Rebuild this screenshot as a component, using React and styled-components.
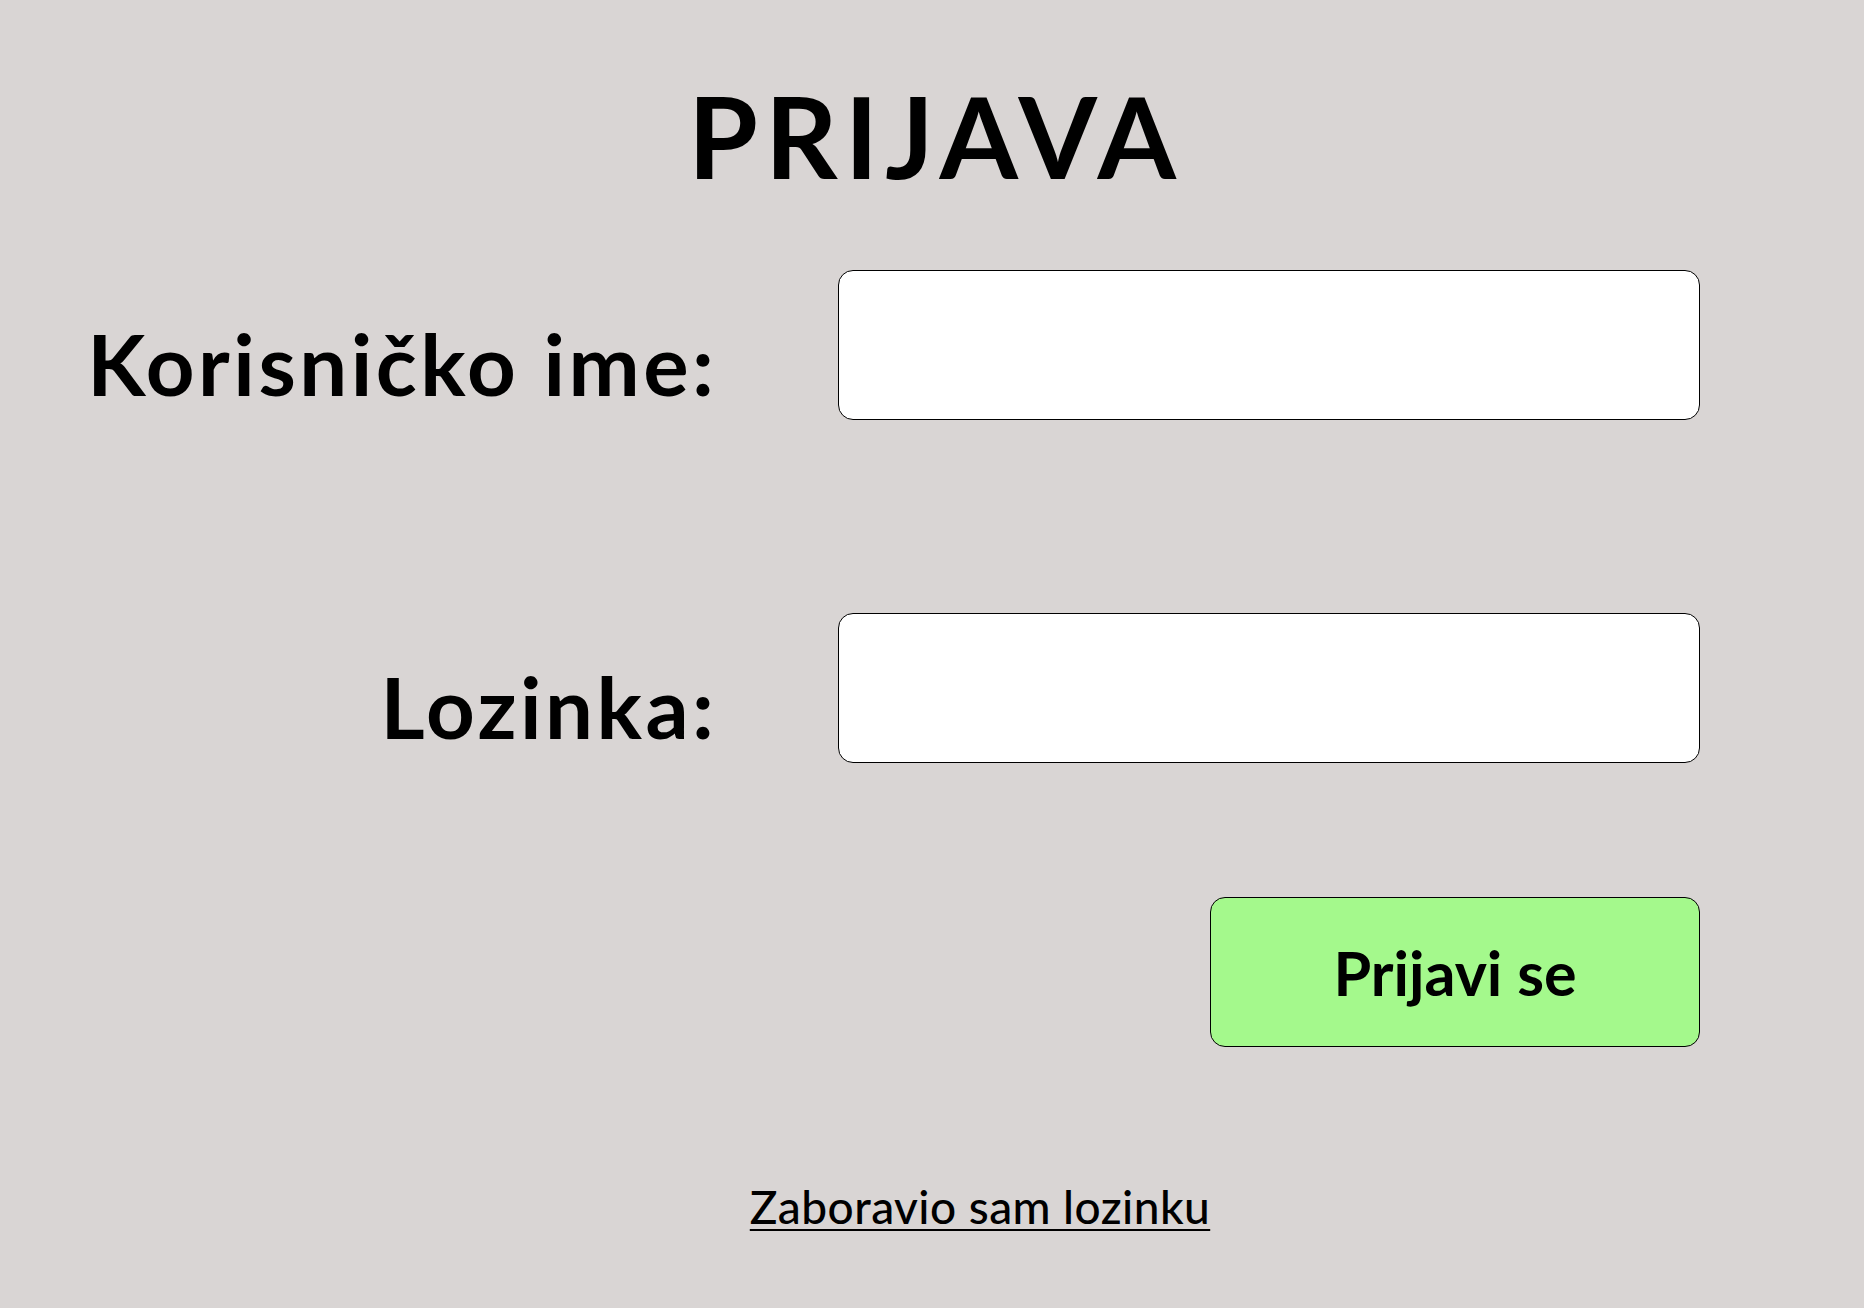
import React from "react";
import styled, { createGlobalStyle } from "styled-components";

const Global = createGlobalStyle`
  html, body { margin: 0; padding: 0; }
  body {
    background: #d9d5d4;
    font-family: "Lato", "Noto Sans", sans-serif;
    color: #000;
  }
`;

const Page = styled.main`
  min-height: 100vh;
  box-sizing: border-box;
  padding-top: 79px;
  display: flex;
  flex-direction: column;
`;

const Title = styled.h1`
  margin: 0;
  font-size: 113px;
  line-height: 1;
  font-weight: 700;
  text-align: center;
  letter-spacing: 7px;
  padding-left: 7px;
`;

const Fields = styled.form`
  margin-top: 78px;
  display: grid;
  grid-template-columns: 714px 862px;
  column-gap: 124px;
  row-gap: 193px;
`;

const Label = styled.label`
  align-self: end;
  justify-self: end;
  font-size: 85px;
  line-height: 1;
  font-weight: 700;
  letter-spacing: 3.5px;
  margin-right: -3.5px;
  padding-bottom: 14px;
  white-space: nowrap;
`;

const Input = styled.input`
  box-sizing: border-box;
  width: 862px;
  height: 150px;
  border: 1px solid #000;
  border-radius: 15px;
  background: #fff;
  font-family: inherit;
  font-size: 48px;
  padding: 0 24px;
  outline: none;
`;

const ButtonRow = styled.div`
  margin-top: 134px;
  width: 1700px;
  display: flex;
  justify-content: flex-end;
`;

const Button = styled.button`
  box-sizing: border-box;
  width: 490px;
  height: 150px;
  border: 1px solid #000;
  border-radius: 15px;
  background: #a4f98c;
  font-family: inherit;
  font-size: 61px;
  font-weight: 700;
  line-height: 1;
  color: #000;
  display: flex;
  align-items: center;
  justify-content: center;
  cursor: pointer;
`;

const LinkRow = styled.div`
  margin-top: 137px;
  padding-left: 96px;
  display: flex;
  justify-content: center;
`;

const ForgotLink = styled.a`
  font-size: 46px;
  line-height: 1;
  font-weight: 500;
  letter-spacing: 0.45px;
  color: #000;
  text-decoration: underline;
  text-decoration-thickness: 2px;
  text-underline-offset: 5px;
  cursor: pointer;
`;

export default function App() {
  return (
    <>
      <Global />
      <Page>
        <Title>PRIJAVA</Title>
        <Fields onSubmit={(e) => e.preventDefault()}>
          <Label htmlFor="username">Korisničko ime:</Label>
          <Input id="username" type="text" />
          <Label htmlFor="password">Lozinka:</Label>
          <Input id="password" type="password" />
        </Fields>
        <ButtonRow>
          <Button type="button">Prijavi se</Button>
        </ButtonRow>
        <LinkRow>
          <ForgotLink>Zaboravio sam lozinku</ForgotLink>
        </LinkRow>
      </Page>
    </>
  );
}
